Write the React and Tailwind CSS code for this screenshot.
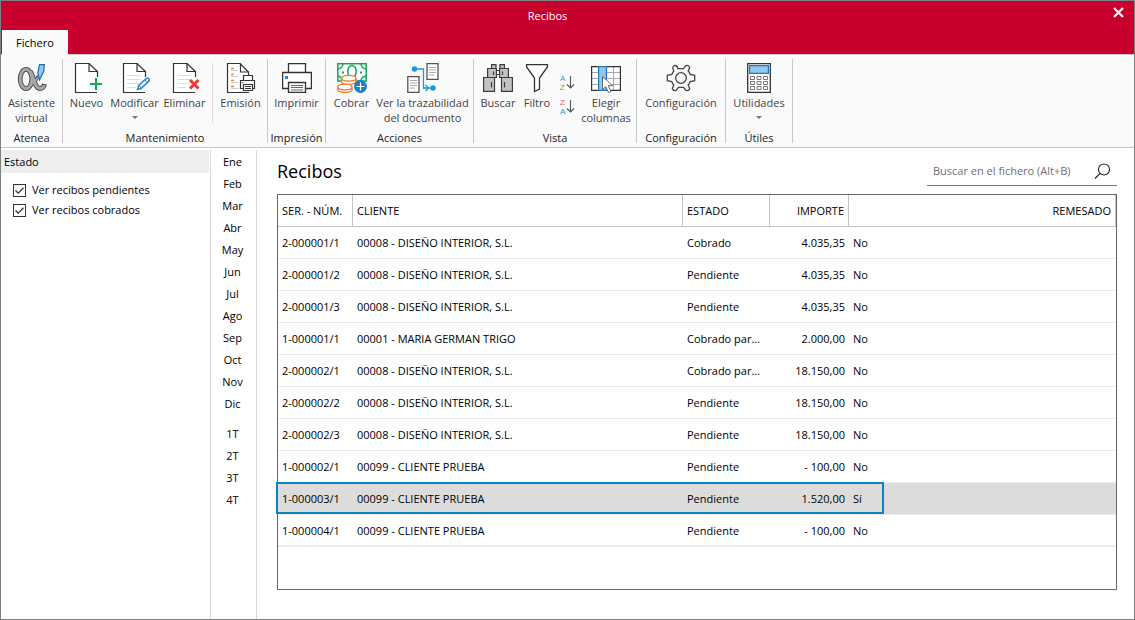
import { useState } from 'react';

const months = ['Ene', 'Feb', 'Mar', 'Abr', 'May', 'Jun', 'Jul', 'Ago', 'Sep', 'Oct', 'Nov', 'Dic'];
const quarters = ['1T', '2T', '3T', '4T'];

const receipts = [
  { num: '2-000001/1', client: '00008 - DISEÑO INTERIOR, S.L.', status: 'Cobrado', amount: '4.035,35', remitted: 'No' },
  { num: '2-000001/2', client: '00008 - DISEÑO INTERIOR, S.L.', status: 'Pendiente', amount: '4.035,35', remitted: 'No' },
  { num: '2-000001/3', client: '00008 - DISEÑO INTERIOR, S.L.', status: 'Pendiente', amount: '4.035,35', remitted: 'No' },
  { num: '1-000001/1', client: '00001 - MARIA GERMAN TRIGO', status: 'Cobrado par...', amount: '2.000,00', remitted: 'No' },
  { num: '2-000002/1', client: '00008 - DISEÑO INTERIOR, S.L.', status: 'Cobrado par...', amount: '18.150,00', remitted: 'No' },
  { num: '2-000002/2', client: '00008 - DISEÑO INTERIOR, S.L.', status: 'Pendiente', amount: '18.150,00', remitted: 'No' },
  { num: '2-000002/3', client: '00008 - DISEÑO INTERIOR, S.L.', status: 'Pendiente', amount: '18.150,00', remitted: 'No' },
  { num: '1-000002/1', client: '00099 - CLIENTE PRUEBA', status: 'Pendiente', amount: '- 100,00', remitted: 'No' },
  { num: '1-000003/1', client: '00099 - CLIENTE PRUEBA', status: 'Pendiente', amount: '1.520,00', remitted: 'Sí' },
  { num: '1-000004/1', client: '00099 - CLIENTE PRUEBA', status: 'Pendiente', amount: '- 100,00', remitted: 'No' },
];

function AssistantIcon() {
  return (
    <svg width="30" height="30" viewBox="0 0 30 30" fill="none">
      <g stroke="#4d4d4d" strokeWidth="4.800">
        <ellipse cx="9" cy="16" rx="5.800" ry="9.600" />
        <path d="M13.500 8.500C17 14 17.500 25.500 23 25.500C25.500 25.500 27 24 27.500 21" />
        <path d="M13 23C17 20 20 16 21.500 13" strokeWidth="3.600" />
      </g>
      <g stroke="#a8a8a8" strokeWidth="2.800">
        <ellipse cx="9" cy="16" rx="5.800" ry="9.600" />
        <path d="M13.500 8.500C17 14 17.500 25.500 23 25.500C25.500 25.500 27 24 27.300 22" />
        <path d="M13 23C17 20 20 16 21.200 14" strokeWidth="1.600" />
      </g>
      <path d="M22.500 1.600H27.400L26.800 8L22.500 17L20.800 10z" fill="#93c8ee" stroke="#1f6cb5" strokeWidth="1.200" />
    </svg>
  );
}

function DocumentIcon({ lines, children }) {
  return (
    <svg width="30" height="30" viewBox="-3 0 30 30" fill="none">
      <path d="M22.500 17V9L14 .5H.5V29.500H22.500V27" fill="#fff" />
      <path d="M22.500 14V8.500L14 .5H.5V29.500H22" stroke="#333" strokeWidth="1.200" />
      <path d="M14 .5V8.500H22.500" stroke="#333" strokeWidth="1.200" />
      {lines && <path d="M4 12.500H18M4 16.500H18M4 20.500H15M4 24.500H13" stroke="#dedede" />}
      {children}
    </svg>
  );
}

function NewIcon() {
  return (
    <DocumentIcon>
      <path d="M21 15V27M15 21H27" stroke="#fafafa" strokeWidth="4" />
      <path d="M21 15V27M15 21H27" stroke="#12a84e" strokeWidth="2" />
    </DocumentIcon>
  );
}

function EditIcon() {
  return (
    <DocumentIcon lines>
      <path d="M14.500 26.500L16 22L23.500 15.500Q25.500 14.500 26.300 16.300L26 18L18 25.500z" fill="#fff" stroke="#2b86c5" strokeWidth="1.500" />
      <path d="M22 17L24.500 19.500M16 22L18 25" stroke="#2b86c5" />
    </DocumentIcon>
  );
}

function DeleteIcon() {
  return (
    <DocumentIcon lines>
      <path d="M17 17L25.500 25.500M25.500 17L17 25.500" stroke="#fafafa" strokeWidth="5" />
      <path d="M17 17L25.500 25.500M25.500 17L17 25.500" stroke="#ef3b36" strokeWidth="3" />
    </DocumentIcon>
  );
}

function EmissionIcon() {
  return (
    <svg width="30" height="30" viewBox="0 0 30 30" fill="none" stroke="#333" strokeWidth="1.200">
      <path d="M22.500 12V9L14 .5H1.500V29.500H14" fill="#fff" />
      <path d="M14.500 .5V9H22.500" />
      <path d="M5 5.500H8M5 11.500H8M5 17.500H8M5 23.500H8" stroke="#f0920f" strokeWidth="1.400" />
      <path d="M5 7.500H12M5 13.500H12M5 19.500H12M5 25.500H13" stroke="#ccc" />
      <path d="M23 29.500H13" />
      <path d="M17.500 17.500V12.500H26.500V17.500M14.500 17.500H28.500V25.500H14.500z" fill="#fff" />
      <path d="M17.500 21.500H26.500V27.500H17.500z" fill="#fff" />
      <path d="M19 23.500H25M19 25.500H25" strokeWidth="1" />
      <path d="M15.500 19.500H17.500" stroke="#2b86c5" />
    </svg>
  );
}

function PrintIcon() {
  return (
    <svg width="30" height="30" viewBox="0 0 30 30" fill="#fff" stroke="#333" strokeWidth="1.300">
      <path d="M6.500 9.500V.6H23.500V9.500" />
      <path d="M.6 9.500H29.400V25.500H.6z" />
      <path d="M6.500 19.500H23.500V29.400H6.500z" />
      <path d="M9 22.500H21M9 24.500H21M9 27H21" strokeWidth="1" stroke="#666" />
      <path d="M3 13H6V16H3z" fill="#1e88d2" stroke="none" />
    </svg>
  );
}

function CollectIcon() {
  return (
    <svg width="30" height="30" viewBox="0 0 30 30" fill="none">
      <path d="M.8 .8H29.200V18H.8z" fill="#fff" stroke="#17a558" strokeWidth="1.500" />
      <path d="M1 6Q5.500 5.500 6 1M24 1Q24.500 5.500 29 6M1 13Q4 13.500 5 17M29 13Q25 13.500 24 17" stroke="#17a558" strokeWidth="1.400" />
      <ellipse cx="15" cy="8.500" rx="4.200" ry="6" stroke="#17a558" strokeWidth="1.500" />
      <path d="M5 9.500H7M23 9.500H25" stroke="#17a558" strokeWidth="2" />
      <g fill="#fff" stroke="#ee7b30" strokeWidth="1.300">
        <path d="M.8 24.300V26.500C.8 30.300 15 30.300 15 26.500V24.300" />
        <ellipse cx="7.900" cy="24" rx="7.100" ry="2.900" />
        <path d="M4.700 15.500V18.500C4.700 22.300 19 22.300 19 18.500V15.500" />
        <ellipse cx="11.800" cy="15.300" rx="7.200" ry="2.900" />
      </g>
      <circle cx="23.500" cy="23.500" r="6.500" fill="#1b80c8" />
      <path d="M23.500 19.500V27.500M19.500 23.500H27.500" stroke="#fff" strokeWidth="1.200" />
    </svg>
  );
}

function TraceIcon() {
  return (
    <svg width="32" height="30" viewBox="0 0 32 30" fill="#fff" stroke="#555" strokeWidth="1.300">
      <path d="M20 .6H31V16.400H20zM.8 13.600H12V29.400H.8z" />
      <path d="M22 4.500H29M22 7H29M22 9.500H29M22 12H27M3 17.500H10M3 20H10M3 22.500H10M3 25H8" stroke="#aaa" strokeWidth="1" />
      <path d="M8 6H16.500V25H26M18.500 22L21.500 25L18.500 28" fill="none" stroke="#129be0" strokeWidth="1.300" />
      <circle cx="7.500" cy="6" r="2.700" fill="#129be0" stroke="none" />
      <circle cx="26" cy="25" r="2.700" fill="#129be0" stroke="none" />
    </svg>
  );
}

function BinocularsIcon() {
  return (
    <svg width="30" height="30" viewBox="0 0 30 30" fill="#c3c3c3" stroke="#3c3c3c" strokeWidth="1.200">
      <path d="M13 7.500H17M13 11.500H17" />
      <path d="M8.600 1.600H13V5.500H8.600zM17 1.600H21.400V5.500H17z" />
      <path d="M4.600 5.500H13.400V14.500H4.600zM16.600 5.500H25.400V14.500H16.600z" />
      <path d="M.6 14.500H11.500V28.400H.6zM18.500 14.500H29.400V28.400H18.500z" />
      <path d="M10.500 8.500V12M19.500 8.500V12M8.500 19V24.500M21.500 19V24.500" />
    </svg>
  );
}

function FilterIcon() {
  return (
    <svg width="24" height="30" viewBox="0 0 24 30" fill="#fff" stroke="#333" strokeWidth="1.300">
      <path d="M1.600 1.600H22.400V4L14.500 15V26L9.500 28.500V15L1.600 4z" />
    </svg>
  );
}

function SortIcon({ letters }) {
  const colors = letters === 'AZ' ? ['#3d97d8', '#e8636a'] : ['#e8636a', '#3d97d8'];
  return (
    <svg width="16" height="20" viewBox="0 0 16 20" fontFamily="Liberation Sans, sans-serif" fontSize="8">
      <text x="1" y="8" fill={colors[0]}>{letters[0]}</text>
      <text x="1" y="17" fill={colors[1]}>{letters[1]}</text>
      <path d="M11.500 3V15M8 11.500L11.500 15L15 11.500" fill="none" stroke="#555" strokeWidth="1.100" />
    </svg>
  );
}

function ColumnsIcon() {
  return (
    <svg width="30" height="30" viewBox="0 0 30 30" fill="none">
      <path d="M.6 3.600H29.400V27.400H.6z" fill="#fff" />
      <path d="M.6 9.500H29.400M.6 15.500H29.400M.6 21.500H29.400M22.500 4V27" stroke="#aaa" />
      <path d="M.6 3.600H29.400V27.400H.6z" stroke="#333" strokeWidth="1.200" />
      <path d="M7.600 3.600H15.400V27.400H7.600z" fill="#93c8ee" stroke="#1e78bf" strokeWidth="1.200" />
      <path d="M11.500 13.500V26.500L14.700 23.700L17.500 29.500L20 28.300L17.300 22.700H21.700z" fill="#fff" stroke="#666" />
    </svg>
  );
}

function GearIcon() {
  return (
    <svg width="30" height="30" viewBox="0 0 30 30" fill="none" stroke="#444" strokeWidth="1.300">
      <path d="M11.800 5.600Q11.300 2.200 8.600 2.500Q6.500 3.300 6.800 5L7.800 8Q7 9 5.800 11.500L1.300 12.300V17.700L5.800 18.500Q6.600 21 7.800 22L6.300 25.500Q7 28 10 27.500L12.500 24.300H17.500L20 27.500Q23 28 23.700 25.500L22.200 22Q23.400 21 24.200 18.500L28.700 17.700V12.300L24.200 11.500Q23.400 9 22.200 8L23.700 4.500Q23 2 20 2.500L17.500 5.700z" />
      <circle cx="15" cy="15" r="5.300" />
    </svg>
  );
}

function CalculatorIcon() {
  return (
    <svg width="24" height="30" viewBox="0 0 24 30" fill="#fff" stroke="#333" strokeWidth="1.300">
      <path d="M.7 .7H23.300V29.300H.7z" />
      <path d="M2.600 2.600H21.400V10.400H2.600z" fill="#93c8ee" stroke="#1e78bf" strokeWidth="1.200" />
      <g stroke="#777" strokeWidth="1">
        <path d="M3.500 13.500H7.500V16.500H3.500zM10 13.500H14V16.500H10zM16.500 13.500H20.500V16.500H16.500z" />
        <path d="M3.500 18.500H7.500V21.500H3.500zM10 18.500H14V21.500H10zM16.500 18.500H20.500V21.500H16.500z" />
        <path d="M3.500 23.500H7.500V26.500H3.500zM10 23.500H14V26.500H10zM16.500 23.500H20.500V26.500H16.500z" />
      </g>
    </svg>
  );
}

function RibbonGroup({ label, className, children }) {
  return (
    <section className={`flex shrink-0 flex-col border-r border-[#c8c8c8] ${className}`}>
      <div className="flex h-[73px] shrink-0 justify-center pt-1">{children}</div>
      <h2 className="text-center leading-3 whitespace-nowrap text-[#222]">{label}</h2>
    </section>
  );
}

function RibbonButton({ icon, label, width, dropdown }) {
  return (
    <button type="button" className={`flex shrink-0 flex-col items-center text-[#444] ${width}`}>
      {icon}
      <span className="mt-0.5 text-center leading-[15px] whitespace-pre">{label}</span>
      {dropdown && <span className="mt-1.5 border-x-3 border-t-3 border-x-transparent border-t-[#777]" />}
    </button>
  );
}

function FilterCheck({ label, checked, onChange }) {
  return (
    <label className="flex h-5 items-center gap-1.5">
      <span className="relative flex size-[13px]">
        <input type="checkbox" checked={checked} onChange={onChange} className="size-[13px] appearance-none border border-[#333] bg-white" />
        {checked && (
          <svg className="pointer-events-none absolute inset-0" width="13" height="13" viewBox="0 0 13 13" fill="none">
            <path d="M2.500 6.500L5.200 9.200L10.500 3.800" stroke="#333" strokeWidth="1.300" />
          </svg>
        )}
      </span>
      {label}
    </label>
  );
}

export default function App() {
  const [showPending, setShowPending] = useState(true);
  const [showPaid, setShowPaid] = useState(true);
  const [selected, setSelected] = useState('1-000003/1');
  const [search, setSearch] = useState('');

  return (
    <div className="flex min-h-screen flex-col border border-[#808080] bg-white font-['Open_Sans',sans-serif] text-[11px] text-black">
      <header className="relative flex h-[54px] flex-col justify-between border-b border-[#c8c8c8] bg-[#c8002d]">
        <h1 className="pt-1.5 pr-11 pl-1 text-center leading-[18px] text-white">Recibos</h1>
        <button type="button" aria-label="Cerrar" className="absolute top-1.5 right-2.5 text-white">
          <svg width="11" height="11" viewBox="0 0 11 11" stroke="currentColor" strokeWidth="2.200">
            <path d="M1 1L10 10M10 1L1 10" />
          </svg>
        </button>
        <nav className="-mb-px flex pl-px">
          <button type="button" className="h-[25px] w-[66px] bg-[#fafafa] pt-0.5">Fichero</button>
        </nav>
      </header>

      <div className="flex h-[93px] overflow-hidden border-b border-[#c8c8c8] bg-[#fafafa] pt-1 pb-1">
        <RibbonGroup label="Atenea" className="w-[62px]">
          <RibbonButton icon={<AssistantIcon />} label={'Asistente\nvirtual'} width="w-[60px]" />
        </RibbonGroup>
        <RibbonGroup label="Mantenimiento" className="w-[205px]">
          <RibbonButton icon={<NewIcon />} label="Nuevo" width="w-[46px]" />
          <RibbonButton icon={<EditIcon />} label="Modificar" width="w-[50px]" dropdown />
          <RibbonButton icon={<DeleteIcon />} label="Eliminar" width="w-[50px]" />
          <div className="mx-0.5 h-[60px] w-px bg-[#dcdcdc]" />
          <RibbonButton icon={<EmissionIcon />} label="Emisión" width="w-[52px]" />
        </RibbonGroup>
        <RibbonGroup label="Impresión" className="w-[58px]">
          <RibbonButton icon={<PrintIcon />} label="Imprimir" width="w-[50px]" />
        </RibbonGroup>
        <RibbonGroup label="Acciones" className="w-[148px]">
          <RibbonButton icon={<CollectIcon />} label="Cobrar" width="w-[46px]" />
          <RibbonButton icon={<TraceIcon />} label={'Ver la trazabilidad\ndel documento'} width="w-[96px]" />
        </RibbonGroup>
        <RibbonGroup label="Vista" className="w-[163px]">
          <RibbonButton icon={<BinocularsIcon />} label="Buscar" width="w-[42px]" />
          <RibbonButton icon={<FilterIcon />} label="Filtro" width="w-[36px]" />
          <div className="flex w-6 flex-col items-center gap-1 pt-2.5">
            <button type="button" aria-label="Orden ascendente"><SortIcon letters="AZ" /></button>
            <button type="button" aria-label="Orden descendente"><SortIcon letters="ZA" /></button>
          </div>
          <RibbonButton icon={<ColumnsIcon />} label={'Elegir\ncolumnas'} width="w-[54px]" />
        </RibbonGroup>
        <RibbonGroup label="Configuración" className="w-[89px]">
          <RibbonButton icon={<GearIcon />} label="Configuración" width="w-[80px]" />
        </RibbonGroup>
        <RibbonGroup label="Útiles" className="w-[67px]">
          <RibbonButton icon={<CalculatorIcon />} label="Utilidades" width="w-[60px]" dropdown />
        </RibbonGroup>
      </div>

      <div className="flex flex-1 pt-0.5">
        <aside className="w-[210px] shrink-0 border-r border-[#d9d9d9] pr-px">
          <h2 className="h-[23px] bg-[#eee] pl-[3px] leading-[23px]">Estado</h2>
          <div className="pt-[7px] pl-3">
            <FilterCheck label="Ver recibos pendientes" checked={showPending} onChange={(e) => setShowPending(e.target.checked)} />
            <FilterCheck label="Ver recibos cobrados" checked={showPaid} onChange={(e) => setShowPaid(e.target.checked)} />
          </div>
        </aside>

        <nav className="flex w-[46px] shrink-0 flex-col gap-2 border-r border-[#d9d9d9] pt-px pr-0.5">
          <div className="flex flex-col">
            {months.map((month) => (
              <button key={month} type="button" className="h-[22px]">{month}</button>
            ))}
          </div>
          <div className="flex flex-col">
            {quarters.map((quarter) => (
              <button key={quarter} type="button" className="h-[22px]">{quarter}</button>
            ))}
          </div>
        </nav>

        <main className="flex min-w-0 flex-1 flex-col pr-[17px] pb-[29px] pl-5">
          <div className="flex h-11 items-start justify-between">
            <h2 className="pt-1.5 text-lg leading-[30px]">Recibos</h2>
            <div className="mt-1.5 flex h-[30px] w-[190px] items-center border-b border-[#777] pt-0.5 pr-1.5 pl-1.5">
              <input
                type="text"
                aria-label="Buscar en el fichero"
                value={search}
                onChange={(e) => setSearch(e.target.value)}
                placeholder="Buscar en el fichero (Alt+B)"
                className="min-w-0 flex-1 outline-none placeholder:text-[#707070]"
              />
              <button type="button" aria-label="Buscar">
                <svg width="17" height="17" viewBox="0 0 17 17" fill="none" stroke="#222" strokeWidth="1.100">
                  <circle cx="10" cy="6.500" r="5.500" />
                  <path d="M6 10.500L1 15.500" />
                </svg>
              </button>
            </div>
          </div>

          <div className="flex-1 border border-[#666]">
            <table className="w-full table-fixed border-separate border-spacing-0">
              <thead>
                <tr className="h-8 text-left *:border-b *:border-r *:border-[#c4c4c4] *:px-1 *:pt-0.5 *:font-normal *:whitespace-nowrap">
                  <th className="w-[75px]">SER. - NÚM.</th>
                  <th className="w-[330px]">CLIENTE</th>
                  <th className="w-[87px]">ESTADO</th>
                  <th className="w-[79px] text-right">IMPORTE</th>
                  <th className="text-right">REMESADO</th>
                </tr>
              </thead>
              <tbody>
                {receipts.map((row) => (
                  <tr
                    key={row.num}
                    onClick={() => setSelected(row.num)}
                    className={`relative h-8 *:border-b *:border-[#ececec] *:px-1 *:pt-0.5 *:whitespace-nowrap last:*:border-b-2 ${row.num === selected ? 'bg-[#dcdcdc]' : ''}`}
                  >
                    <td>
                      {row.num}
                      {row.num === selected && (
                        <span className="pointer-events-none absolute -top-px -left-0.5 h-8 w-[608px] border-2 border-[#0a84c6]" />
                      )}
                    </td>
                    <td>{row.client}</td>
                    <td>{row.status}</td>
                    <td className="text-right">{row.amount}</td>
                    <td>{row.remitted}</td>
                  </tr>
                ))}
              </tbody>
            </table>
          </div>
        </main>
      </div>
    </div>
  );
}
